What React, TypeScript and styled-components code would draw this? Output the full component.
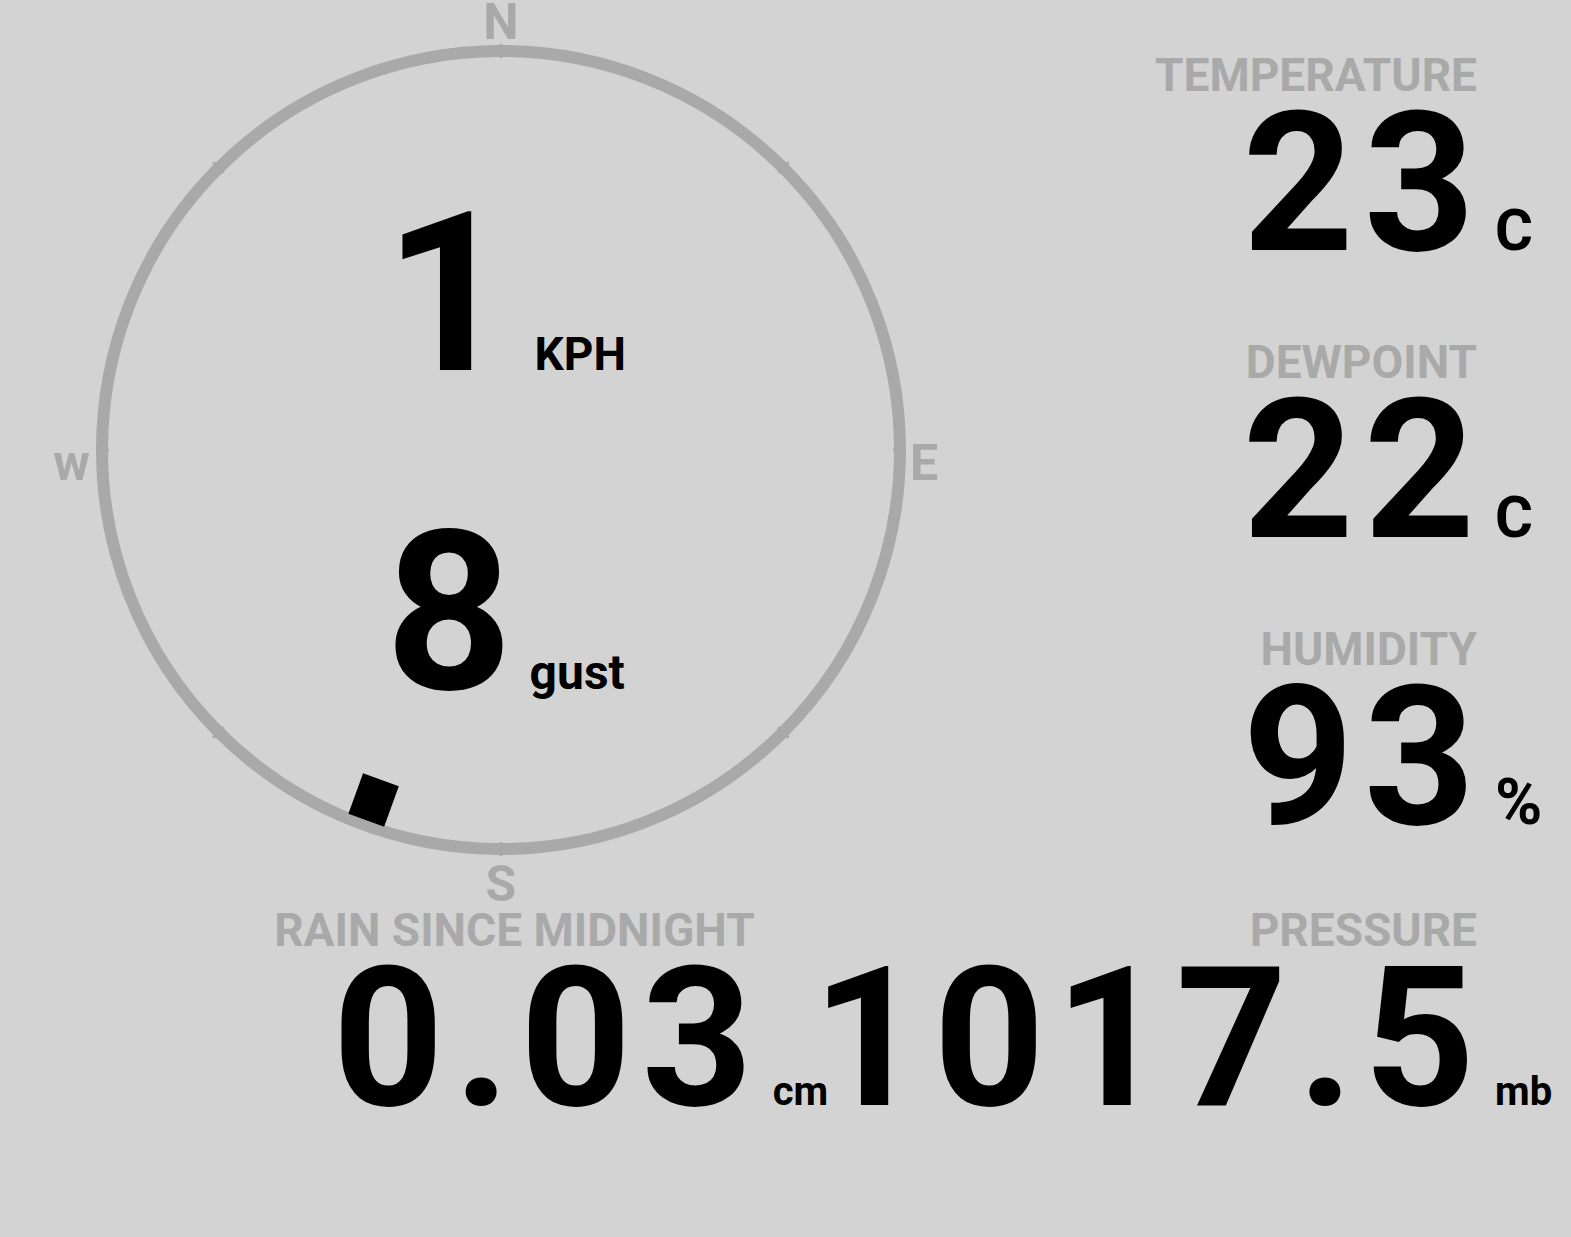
import React from 'react';
import styled, { createGlobalStyle } from 'styled-components';

const GlobalStyle = createGlobalStyle`
  html, body {
    margin: 0;
    padding: 0;
    background: #d3d3d3;
  }
  body {
    font-family: Roboto, 'Liberation Sans', sans-serif;
    font-weight: 700;
    color: #000;
  }
`;

const Page = styled.main`
  width: 1571px;
  height: 1237px;
  display: flex;
  flex-direction: column;
  overflow: hidden;
`;

const TopSection = styled.section`
  display: flex;
  justify-content: space-between;
  align-items: flex-start;
  height: 907px;
`;

const BottomSection = styled.section`
  display: flex;
  justify-content: flex-end;
  align-items: flex-start;
`;

/* compass */

const Compass = styled.div`
  display: grid;
  grid-template-columns: 96px 810px auto;
  grid-template-rows: 44px 812px auto;
`;

const Cardinal = styled.span<{ $col: number; $row: number; $align: string }>`
  grid-column: ${(p) => p.$col};
  grid-row: ${(p) => p.$row};
  justify-self: ${(p) => p.$align};
  align-self: ${(p) => (p.$row === 2 ? 'center' : 'start')};
  margin-top: ${(p) => (p.$row === 2 ? 26 : p.$row === 3 ? 6 : 0)}px;
  padding: 0 ${(p) => (p.$col === 1 ? 6 : 0)}px 0 ${(p) => (p.$col === 3 ? 4 : 0)}px;
  font-size: 50px;
  line-height: 44px;
  color: #a9a9a9;
`;

const Ring = styled.div`
  grid-column: 2;
  grid-row: 2;
  position: relative;
  display: flex;
  flex-direction: column;
  align-items: center;
  gap: 152px;
  padding-top: 167px;
  box-sizing: border-box;
`;

const RingArt = styled.svg`
  position: absolute;
  inset: 0;
`;

const Reading = styled.div`
  position: relative;
  display: flex;
  align-items: baseline;
  padding-left: 8px;
`;

const ReadingValue = styled.span`
  font-size: 222px;
  line-height: 0.75;
`;

const ReadingUnit = styled.span<{ $size: number; $gap: number }>`
  margin-left: ${(p) => p.$gap}px;
  font-size: ${(p) => p.$size}px;
  line-height: 1;
`;

/* stats */

const StatColumn = styled.div`
  display: flex;
  flex-direction: column;
  align-items: flex-end;
  padding-top: 52px;
`;

const Stat = styled.div<{ $unitWidth?: number; $shift?: number }>`
  display: grid;
  grid-template-columns: auto ${(p) => (p.$unitWidth ? `${p.$unitWidth}px` : 'auto')};
  column-gap: 18px;
  align-items: baseline;
  margin-bottom: 80px;
  margin-right: ${(p) => p.$shift || 0}px;
`;

const Label = styled.div`
  grid-column: 1;
  grid-row: 1;
  justify-self: end;
  margin-bottom: 13px;
  font-size: 46px;
  line-height: 46px;
  color: #a9a9a9;
  white-space: nowrap;
`;

const Value = styled.div`
  grid-column: 1;
  grid-row: 2;
  justify-self: end;
  margin-right: -8px;
  font-size: 194px;
  line-height: 0.75;
  letter-spacing: 10px;
  white-space: nowrap;
`;

const Unit = styled.div<{ $size: number }>`
  grid-column: 2;
  grid-row: 2;
  font-size: ${(p) => p.$size}px;
  line-height: 1;
  white-space: nowrap;
`;

const TICKS = [0, 45, 90, 135, 180, 225, 270, 315];
const CX = 405;
const CY = 406;
const WIND_BEARING = 200;

function CompassRing() {
  return (
    <RingArt width="810" height="812" viewBox="0 0 810 812">
      <circle cx={CX} cy={CY} r="399" fill="none" stroke="#a9a9a9" strokeWidth="12" />
      {TICKS.map((deg) => (
        <line
          key={deg}
          x1={CX}
          y1={CY - 392}
          x2={CX}
          y2={CY - 407}
          stroke="#a9a9a9"
          strokeWidth="3"
          transform={`rotate(${deg} ${CX} ${CY})`}
        />
      ))}
      <rect
        x={CX - 19}
        y={CY - 394}
        width="38"
        height="43"
        fill="#000"
        transform={`rotate(${WIND_BEARING} ${CX} ${CY})`}
      />
    </RingArt>
  );
}

export default function App() {
  return (
    <Page>
      <GlobalStyle />
      <TopSection>
        <Compass>
          <Cardinal $col={2} $row={1} $align="center">N</Cardinal>
          <Cardinal $col={1} $row={2} $align="end">w</Cardinal>
          <Ring>
            <CompassRing />
            <Reading>
              <ReadingValue>1</ReadingValue>
              <ReadingUnit $size={46} $gap={23}>KPH</ReadingUnit>
            </Reading>
            <Reading>
              <ReadingValue>8</ReadingValue>
              <ReadingUnit $size={48} $gap={17}>gust</ReadingUnit>
            </Reading>
          </Ring>
          <Cardinal $col={3} $row={2} $align="start">E</Cardinal>
          <Cardinal $col={2} $row={3} $align="center">S</Cardinal>
        </Compass>

        <StatColumn>
          <Stat $unitWidth={76}>
            <Label>TEMPERATURE</Label>
            <Value>23</Value>
            <Unit $size={58}>C</Unit>
          </Stat>
          <Stat $unitWidth={76}>
            <Label>DEWPOINT</Label>
            <Value>22</Value>
            <Unit $size={58}>C</Unit>
          </Stat>
          <Stat $unitWidth={76}>
            <Label>HUMIDITY</Label>
            <Value>93</Value>
            <Unit $size={64}>%</Unit>
          </Stat>
        </StatColumn>
      </TopSection>

      <BottomSection>
        <Stat $shift={-16}>
          <Label>RAIN SINCE MIDNIGHT</Label>
          <Value>0.03</Value>
          <Unit $size={40}>cm</Unit>
        </Stat>
        <Stat $unitWidth={76}>
          <Label>PRESSURE</Label>
          <Value>1017.5</Value>
          <Unit $size={40}>mb</Unit>
        </Stat>
      </BottomSection>
    </Page>
  );
}
